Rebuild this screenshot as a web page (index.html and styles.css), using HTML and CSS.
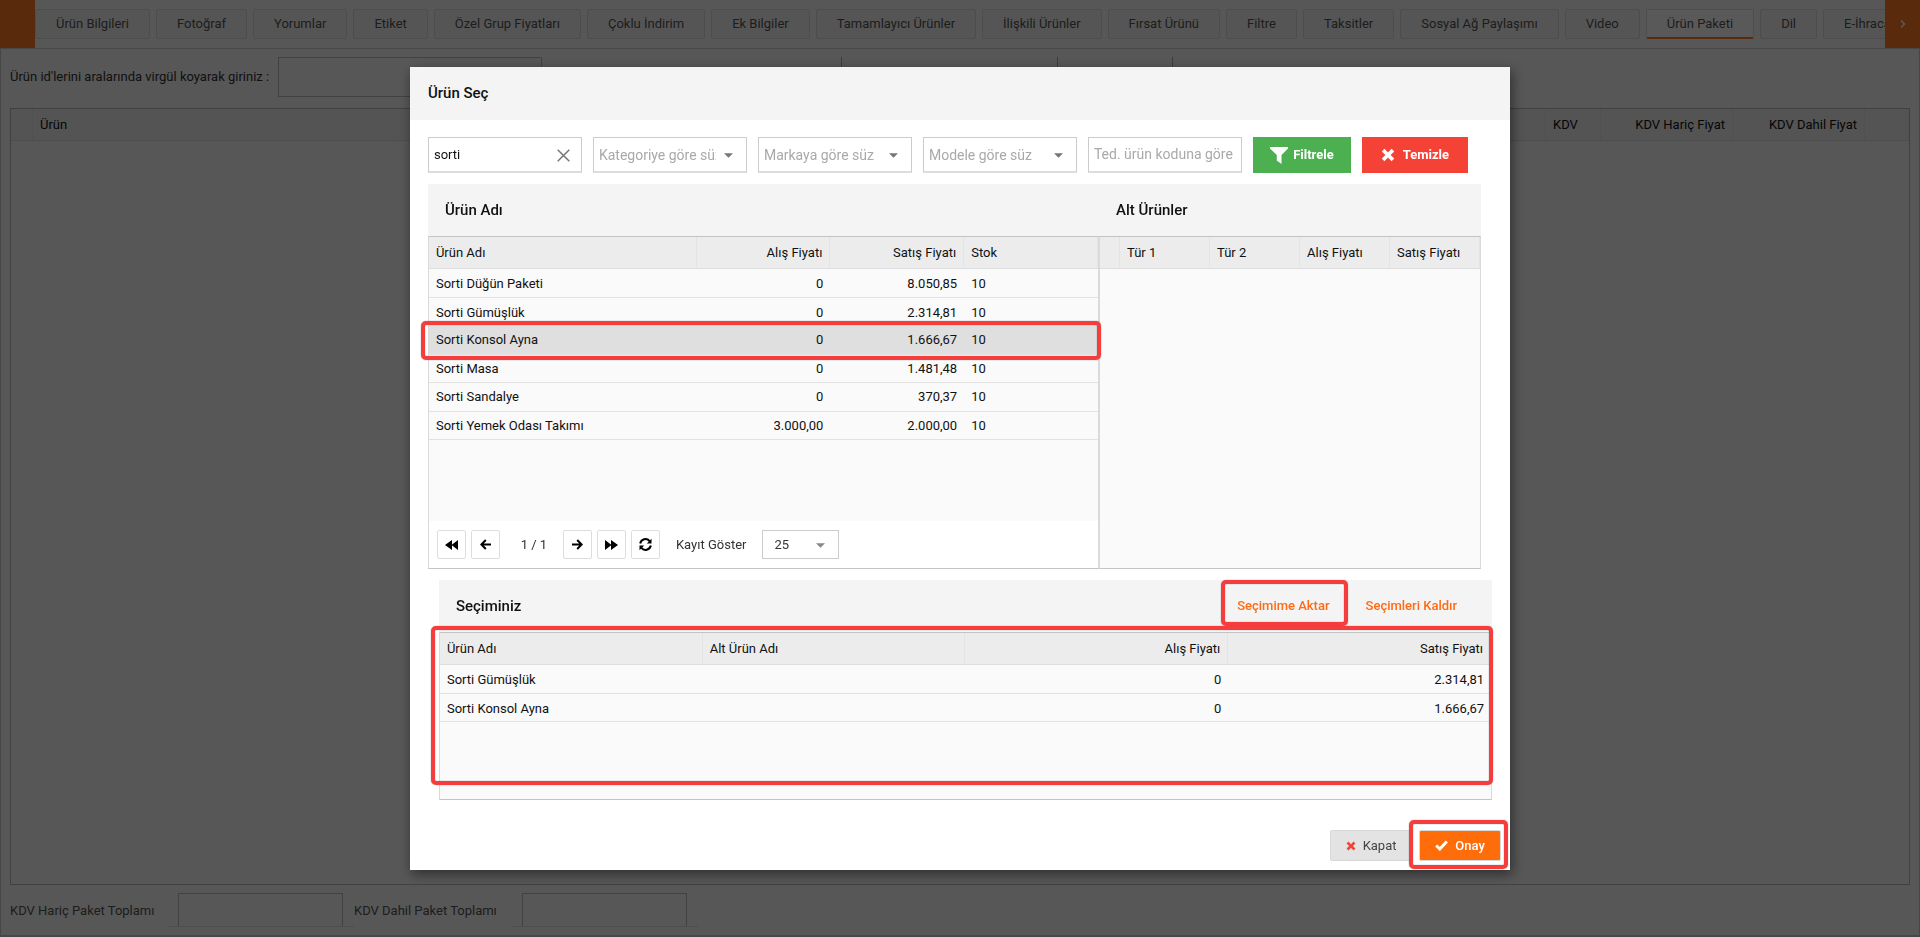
FILE: index.html
```html
<!DOCTYPE html>
<html lang="tr">
<head>
<meta charset="utf-8">
<title>Ürün Paketi</title>
<link rel="stylesheet" href="styles.css">
</head>
<body>
<svg class="sprite" aria-hidden="true">
  <symbol id="i-caret" viewBox="0 0 10 5"><path d="M0 0h10L5 5z"/></symbol>
  <symbol id="i-times" viewBox="0 0 14 14"><path d="M3.4.8 7 4.4 10.6.8l2.6 2.6L9.6 7l3.6 3.6-2.6 2.6L7 9.6l-3.600 3.600L.8 10.600 4.400 7 .8 3.400z"/></symbol>
</svg>

<div class="page">
  <nav class="tabbar">
    <div class="scroller"></div>
    <div class="tabs">
      <button class="tab">Ürün Bilgileri</button>
      <button class="tab">Fotoğraf</button>
      <button class="tab">Yorumlar</button>
      <button class="tab">Etiket</button>
      <button class="tab">Özel Grup Fiyatları</button>
      <button class="tab">Çoklu İndirim</button>
      <button class="tab">Ek Bilgiler</button>
      <button class="tab">Tamamlayıcı Ürünler</button>
      <button class="tab">İlişkili Ürünler</button>
      <button class="tab">Fırsat Ürünü</button>
      <button class="tab">Filtre</button>
      <button class="tab">Taksitler</button>
      <button class="tab">Sosyal Ağ Paylaşımı</button>
      <button class="tab">Video</button>
      <button class="tab active">Ürün Paketi</button>
      <button class="tab">Dil</button>
      <button class="tab">E-İhracat</button>
    </div>
    <button class="scroller" aria-label="İleri">
      <svg width="6" height="8" viewBox="0 0 6 8"><path d="M1 .5 4.500 4 1 7.500" fill="none" stroke="#fff" stroke-width="1.500"/></svg>
    </button>
  </nav>

  <main class="content">
    <div class="id-row">
      <label for="ids">Ürün id'lerini aralarında virgül koyarak giriniz :</label>
      <input id="ids" class="box ids" type="text">
      <div class="seg seg-a"></div><div class="seg seg-b"></div><div class="seg seg-c"></div>
    </div>
    <div class="package">
      <table class="grid package-grid">
        <colgroup><col class="p0"><col><col class="p2"><col class="p3"><col class="p3"><col class="p5"></colgroup>
        <thead><tr><th></th><th>Ürün</th><th>KDV</th><th class="num">KDV Hariç Fiyat</th><th class="num">KDV Dahil Fiyat</th><th></th></tr></thead>
      </table>
    </div>
    <div class="totals">
      <label for="t1">KDV Hariç Paket Toplamı</label>
      <div class="total-wrap"><input id="t1" class="box total" type="text"></div>
      <label for="t2">KDV Dahil Paket Toplamı</label>
      <div class="total-wrap"><input id="t2" class="box total" type="text"></div>
    </div>
  </main>
</div>

<div class="overlay">
  <section class="modal" role="dialog" aria-labelledby="dlg">
    <h2 class="modal-head" id="dlg">Ürün Seç</h2>
    <div class="modal-body">
      <form class="filters">
        <div class="field">
          <input type="text" value="sorti" aria-label="Ürün adı">
          <svg class="clear" width="13" height="13" viewBox="0 0 13 13"><path d="M.7.7l11.600 11.600M12.300.7.7 12.300" stroke="#777" stroke-width="1.500"/></svg>
        </div>
        <div class="field">
          <select class="hint" aria-label="Kategori"><option>Kategoriye göre süz</option></select>
          <svg class="caret"><use href="#i-caret"/></svg>
        </div>
        <div class="field">
          <select class="hint" aria-label="Marka"><option>Markaya göre süz</option></select>
          <svg class="caret"><use href="#i-caret"/></svg>
        </div>
        <div class="field">
          <select class="hint" aria-label="Model"><option>Modele göre süz</option></select>
          <svg class="caret"><use href="#i-caret"/></svg>
        </div>
        <div class="field"><input type="text" placeholder="Ted. ürün koduna göre" aria-label="Ted. ürün kodu"></div>
        <button type="button" class="btn green"><svg width="18" height="19" viewBox="0 0 18 19"><path d="M0 1h18v1.500L11.500 9v9L6.800 14.500V9L0 2.500z"/></svg>Filtrele</button>
        <button type="button" class="btn red"><svg width="14" height="14"><use href="#i-times"/></svg>Temizle</button>
      </form>

      <div class="panels">
        <section class="panel">
          <h3 class="panel-head">Ürün Adı</h3>
          <div class="panel-body">
            <div class="rows">
              <table class="grid">
                <colgroup><col class="a0"><col class="a1"><col class="a1"><col class="a1"></colgroup>
                <thead><tr><th>Ürün Adı</th><th class="num">Alış Fiyatı</th><th class="num">Satış Fiyatı</th><th>Stok</th></tr></thead>
                <tbody>
                  <tr><td>Sorti Düğün Paketi</td><td class="num">0</td><td class="num">8.050,85</td><td>10</td></tr>
                  <tr><td>Sorti Gümüşlük</td><td class="num">0</td><td class="num">2.314,81</td><td>10</td></tr>
                  <tr class="selected"><td>Sorti Konsol Ayna<span class="mark mark-row"></span></td><td class="num">0</td><td class="num">1.666,67</td><td>10</td></tr>
                  <tr><td>Sorti Masa</td><td class="num">0</td><td class="num">1.481,48</td><td>10</td></tr>
                  <tr><td>Sorti Sandalye</td><td class="num">0</td><td class="num">370,37</td><td>10</td></tr>
                  <tr><td>Sorti Yemek Odası Takımı</td><td class="num">3.000,00</td><td class="num">2.000,00</td><td>10</td></tr>
                </tbody>
              </table>
            </div>
            <div class="pager">
              <button class="pg" aria-label="İlk"><svg width="13" height="10" viewBox="0 0 13 10"><path d="M7 0v10L0 5zM13 0v10L6.500 5z"/></svg></button>
              <button class="pg" aria-label="Önceki"><svg width="11" height="11" viewBox="0 0 11 11"><path d="M11 5.500H1.500M5.800 1 1.300 5.500 5.800 10" class="line"/></svg></button>
              <span class="page-no">1 / 1</span>
              <button class="pg" aria-label="Sonraki"><svg width="11" height="11" viewBox="0 0 11 11"><path d="M0 5.500h9.500M5.200 1 9.700 5.500 5.200 10" class="line"/></svg></button>
              <button class="pg" aria-label="Son"><svg width="13" height="10" viewBox="0 0 13 10"><path d="M0 0v10l6.500-5zM6 0v10l7-5z"/></svg></button>
              <button class="pg" aria-label="Yenile"><svg width="13" height="13" viewBox="0 0 13 13"><path d="M1.200 5.500A5.300 5.300 0 0 1 10.600 3.200M11.800 7.500A5.300 5.300 0 0 1 2.400 9.800" class="line"/><path d="M12.500.8v4.700H7.800zM.5 12.200V7.500h4.700z"/></svg></button>
              <label for="size" class="size-label">Kayıt Göster</label>
              <div class="size"><select id="size"><option>25</option></select><svg class="caret"><use href="#i-caret"/></svg></div>
            </div>
          </div>
        </section>
        <section class="panel">
          <h3 class="panel-head">Alt Ürünler</h3>
          <div class="panel-body">
            <div class="rows">
              <table class="grid">
                <colgroup><col class="b0"><col><col><col><col></colgroup>
                <thead><tr><th></th><th>Tür 1</th><th>Tür 2</th><th>Alış Fiyatı</th><th>Satış Fiyatı</th></tr></thead>
              </table>
            </div>
          </div>
        </section>
      </div>

      <section class="panel chosen">
        <div class="panel-head">
          <h3 class="panel-title">Seçiminiz</h3>
          <button class="link">Seçimime Aktar<span class="mark mark-link"></span></button>
          <button class="link">Seçimleri Kaldır</button>
        </div>
        <div class="panel-body chosen-body">
          <table class="grid">
            <thead><tr><th>Ürün Adı</th><th>Alt Ürün Adı</th><th class="num">Alış Fiyatı</th><th class="num">Satış Fiyatı</th></tr></thead>
            <tbody>
              <tr><td>Sorti Gümüşlük</td><td></td><td class="num">0</td><td class="num">2.314,81</td></tr>
              <tr><td>Sorti Konsol Ayna</td><td></td><td class="num">0</td><td class="num">1.666,67</td></tr>
            </tbody>
          </table>
          <span class="mark mark-grid"></span>
        </div>
      </section>
    </div>
    <footer class="modal-foot">
      <button class="act cancel"><svg width="10" height="10"><use href="#i-times"/></svg>Kapat</button>
      <button class="act ok"><svg width="13" height="11" viewBox="0 0 13 11"><path d="M1.200 5.500 4.800 9 11.800 1.500" fill="none" stroke="#fff" stroke-width="3"/></svg>Onay<span class="mark mark-ok"></span></button>
    </footer>
  </section>
</div>
</body>
</html>
```
FILE: styles.css
```css
* { box-sizing: border-box; }
body { margin: 0; font: 13px/20px Roboto, "Noto Sans", sans-serif; color: #111; background: #f9f9f9; }
button, input, select { font: inherit; color: inherit; margin: 0; padding: 0; border: 0; background: none; border-radius: 0; }
h2, h3 { margin: 0; font-weight: 500; font-size: 15px; }
svg { display: block; flex: none; fill: currentColor; }
.sprite { position: absolute; width: 0; height: 0; }
.line { fill: none; stroke: currentColor; stroke-width: 2; }

.page { min-height: 100vh; display: flex; flex-direction: column; }
.tabbar { display: flex; height: 48px; }
.scroller { width: 35px; flex: none; background: #ff7a22; display: grid; place-items: center; }
.tabs { flex: 1; min-width: 0; overflow: hidden; display: flex; align-items: flex-start; gap: 6px; padding-top: 9px; }
.tab { flex: none; height: 30px; padding: 0 20px; border: 1px solid #ddd; border-radius: 2px; background: #f4f4f4; color: #555; }
.tab.active { background: #fff; border-bottom: 2px solid #ff7a22; }

.content { flex: 1; display: flex; flex-direction: column; border: 1px solid #ccc; border-bottom-width: 2px; padding: 8px 9px 0; }
.id-row { display: flex; align-items: center; height: 40px; color: #333; }
.box { border: 1px solid #bbb; }
.ids { width: 264px; height: 40px; margin-left: 9px; }
.seg { height: 40px; border-left: 1px solid #aaa; }
.seg-a { margin-left: 299px; width: 216px; }
.seg-b { width: 115px; }
.package { flex: 1; margin-top: 11px; border: 1px solid #bbb; }
.totals { display: flex; height: 50px; padding-top: 8px; align-items: flex-start; line-height: 36px; color: #555; }
.totals label { width: 157px; }
.total-wrap { width: 187px; padding: 0 11px; border-bottom: 1px solid #ddd; display: flex; }
.total { width: 165px; height: 33px; border-bottom: 0; }

.grid { width: 100%; table-layout: fixed; border-collapse: separate; border-spacing: 0; }
.grid th { height: 32px; padding: 0 7px; background: #ececec; border-bottom: 1px solid #ddd; border-right: 1px solid #e4e4e4; text-align: left; font-weight: 400; white-space: nowrap; }
.grid td { height: 29px; padding: 0 7px; border-bottom: 1px solid #e2e2e2; white-space: nowrap; }
.grid tr:nth-child(even) td { height: 28px; }
.grid tr:nth-child(-n+2) td { padding-top: 2px; }
.grid .num { text-align: right; }
.package-grid th { background: #f0f0f0; }
.p0 { width: 22px; } .p2 { width: 55px; } .p3 { width: 132px; } .p5 { width: 44px; }
.a0 { width: 40%; } .a1 { width: 20%; }
.b0 { width: 20px; }

.overlay { position: fixed; inset: 0; background: rgba(0, 0, 0, .65); display: flex; justify-content: center; align-items: flex-start; padding-top: 67px; }
.modal { width: 57.3%; background: #fff; box-shadow: 2px 4px 12px rgba(0, 0, 0, .5); }
.modal-head { height: 53px; padding: 0 18px; line-height: 52px; background: #f4f4f4; }
.modal-body { padding: 17px 18px 0; }
.filters { display: flex; gap: 11px; }
.field { position: relative; width: 154px; height: 36px; border: 1px solid #ccc; border-bottom: 2px solid #ddd; background: #fff; }
.field input { width: 100%; height: 100%; padding: 0 5px; outline: 0; }
.field select { width: 100%; height: 100%; padding: 0 30px 0 5px; appearance: none; }
.hint, ::placeholder { color: #a9a9a9; opacity: 1; font-size: 14px; }
.clear { position: absolute; right: 11px; top: 11px; }
.caret { position: absolute; right: 13px; top: 15px; width: 9px; height: 5px; color: #777; }
.btn { height: 36px; display: flex; align-items: center; justify-content: center; color: #fff; font-weight: 700; }
.green { width: 98px; gap: 5px; background: #4caf50; }
.red { width: 106px; gap: 8px; background: #f44336; }

.panels { display: grid; grid-template-columns: 671fr 382fr; margin: 11px 11px 0 0; }
.panel { display: flex; flex-direction: column; min-width: 0; }
.panel-head { display: flex; align-items: center; height: 52px; padding: 0 17px; background: #f4f4f4; }
.panel-title { flex: 1; }
.panel-body { flex: 1; display: flex; flex-direction: column; position: relative; border: 1px solid #dadada; border-top-color: #c4c4c4; border-bottom-color: #c4c4c4; }
.rows { flex: 1; min-height: 284px; background: #fafafa; }
.selected { position: relative; z-index: 1; background: #dfdfdf; }
.pager { display: flex; align-items: center; height: 47px; padding: 0 8px; color: #333; }
.pg { width: 29px; height: 29px; margin-right: 5px; border: 1px solid #ddd; border-radius: 2px; background: #fff; color: #000; display: grid; place-items: center; }
.page-no { width: 58px; text-align: center; }
.size-label { margin-left: 11px; }
.size { position: relative; width: 77px; height: 29px; margin-left: 16px; border: 1px solid #ccc; }
.size select { width: 100%; height: 100%; padding-left: 11px; appearance: none; }
.size .caret { top: 12px; color: #888; }

.chosen { margin: 11px 0 0 11px; }
.chosen .panel-head { padding-right: 35px; gap: 36px; }
.link { position: relative; color: #ff6a13; font-weight: 500; cursor: pointer; }
.chosen-body { min-height: 168px; background: #fafafa; }

.modal-foot { display: flex; justify-content: flex-end; gap: 7px; padding: 30px 9px 9px; }
.act { position: relative; height: 31px; width: 82px; display: flex; align-items: center; justify-content: center; gap: 7px; border: 1px solid #d8d8d8; border-radius: 2px; }
.cancel { background: #e3e3e3; color: #444; }
.cancel svg { color: #f44336; }
.ok { background: #ff6c0a; color: #fff; font-weight: 500; }

.mark { position: absolute; border: 4px solid #f53d3d; border-radius: 5px; box-shadow: 0 0 1px #555, inset 0 0 1px #555; pointer-events: none; }
.mark-row { inset: -5px -3px -5px -8px; z-index: 1; }
.mark-link { inset: -16px -18px -10px -16px; }
.mark-grid { inset: -7px -2px 14px -9px; }
.mark-ok { inset: -11px -8px -9px -11px; }
```
